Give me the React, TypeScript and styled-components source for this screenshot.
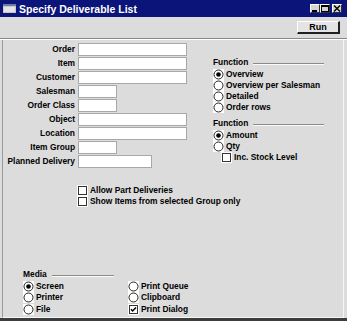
import React from 'react';
import styled, { createGlobalStyle } from 'styled-components';

const GlobalStyle = createGlobalStyle`
  html, body {
    margin: 0;
    padding: 0;
    background: #dcdcdc;
  }
  body {
    font-family: "Liberation Sans Narrow", "Liberation Sans", Arial, sans-serif;
  }
`;

const Window = styled.div`
  width: 347px;
  height: 321px;
  box-sizing: border-box;
  display: flex;
  flex-direction: column;
  background: #dcdcdc;
  border-bottom: 3px solid #3c3c3c;
  overflow: hidden;
`;

const TitleBar = styled.div`
  height: 17px;
  display: flex;
  align-items: center;
  padding: 0 5px 0 3px;
  background: #0b1478;
  color: #fff;
`;

const TitleText = styled.span`
  font-weight: bold;
  font-size: 10.5px;
  margin-left: 3px;
  flex: 1;
`;

const Controls = styled.div`
  display: flex;
`;

const CtrlButton = styled.div<{ gapLeft?: boolean }>`
  width: 10px;
  height: 9px;
  box-sizing: border-box;
  background: #d4d4d4;
  border-top: 1px solid #fff;
  border-left: 1px solid #fff;
  border-right: 1px solid #303030;
  border-bottom: 1px solid #303030;
  margin-left: ${p => (p.gapLeft ? '2px' : '0')};
  display: flex;
  align-items: center;
  justify-content: center;
`;

const Toolbar = styled.div`
  height: 19px;
  display: flex;
  align-items: center;
  justify-content: flex-end;
  padding-right: 7px;
  padding-top: 1px;
`;

const RunButton = styled.button`
  width: 43px;
  height: 13px;
  padding: 0;
  box-sizing: border-box;
  background: #e4e4e4;
  border-top: 1px solid #fff;
  border-left: 1px solid #fff;
  border-right: 2px solid #202020;
  border-bottom: 2px solid #202020;
  font-family: inherit;
  font-weight: bold;
  font-size: 9px;
  line-height: 9px;
  color: #000;
`;

const Separator = styled.div`
  border-top: 1px solid #888;
  border-bottom: 1px solid #fff;
  margin-top: 1px;
`;

const Panel = styled.div`
  flex: 1;
  display: flex;
  flex-direction: column;
  margin: 0 3px 0 2px;
  border-left: 1px solid #9a9a9a;
  border-right: 1px solid #f6f6f6;
  border-bottom: 1px solid #f6f6f6;
  padding: 3px 0 2px 0;
  font-size: 8.4px;
  font-weight: bold;
  color: #000;
`;

const TopArea = styled.div`
  display: flex;
`;

const FieldGrid = styled.div`
  display: grid;
  grid-template-columns: 72px auto;
  column-gap: 3px;
  row-gap: 1px;
  align-items: center;
  width: 205px;
`;

const Label = styled.label`
  justify-self: end;
  text-align: right;
  white-space: nowrap;
  line-height: 13px;
`;

const Field = styled.div<{ w: number }>`
  width: ${p => p.w}px;
  height: 13px;
  box-sizing: border-box;
  background: #fff;
  border: 1px solid #a8a8a8;
`;

const Side = styled.div`
  display: flex;
  flex-direction: column;
  padding-top: 13px;
  margin-left: 5px;
  width: 111px;
`;

const GroupHeader = styled.div<{ lineWidth?: number }>`
  display: flex;
  align-items: flex-end;
  height: 11px;
  line-height: 10px;
  margin-bottom: 2px;

  &::after {
    content: '';
    display: block;
    ${p => (p.lineWidth ? `width: ${p.lineWidth}px;` : 'flex: 1;')}
    margin-left: 5px;
    margin-bottom: 2px;
    border-top: 1px solid #8a8a8a;
    border-bottom: 1px solid #fafafa;
  }
`;

const Option = styled.div<{ indent?: number }>`
  display: flex;
  align-items: center;
  height: 11px;
  line-height: 11px;
  white-space: nowrap;
  padding-left: ${p => p.indent ?? 0}px;
`;

const Mark = styled.span`
  width: 11px;
  height: 11px;
  background: #fff;
  display: inline-flex;
  align-items: center;
  justify-content: center;
  margin-right: 2px;
  flex-shrink: 0;
`;

const Radio: React.FC<{ on?: boolean }> = ({ on }) => (
  <Mark>
    <svg width="11" height="11" viewBox="0 0 11 11">
      <circle cx="5.5" cy="5.5" r="4.5" fill="#fff" stroke="#222" strokeWidth="1" />
      {on && <circle cx="5.5" cy="5.5" r="2.3" fill="#000" />}
    </svg>
  </Mark>
);

const Check: React.FC<{ on?: boolean }> = ({ on }) => (
  <Mark>
    <svg width="11" height="11" viewBox="0 0 11 11">
      <rect x="1.5" y="1.5" width="8" height="8" fill="#fff" stroke="#333" strokeWidth="1" />
      {on && <path d="M3 5.3 L4.6 7 L8 3.4" fill="none" stroke="#000" strokeWidth="1.5" />}
    </svg>
  </Mark>
);

const Group = styled.div`
  display: flex;
  flex-direction: column;
  margin-bottom: 4px;
`;

const Flags = styled.div`
  display: flex;
  flex-direction: column;
  margin-top: 17px;
  padding-left: 74px;
`;

const MediaSection = styled.div`
  margin-top: auto;
  padding-left: 20px;
`;

const MediaGrid = styled.div`
  display: grid;
  grid-template-columns: 105px auto;
  grid-auto-flow: column;
  grid-template-rows: repeat(3, 11.5px);
  align-items: center;
`;

const fields: { label: string; w: number }[] = [
  { label: 'Order', w: 109 },
  { label: 'Item', w: 109 },
  { label: 'Customer', w: 109 },
  { label: 'Salesman', w: 39 },
  { label: 'Order Class', w: 39 },
  { label: 'Object', w: 109 },
  { label: 'Location', w: 109 },
  { label: 'Item Group', w: 39 },
  { label: 'Planned Delivery', w: 74 },
];

const App: React.FC = () => (
  <>
    <GlobalStyle />
    <Window>
      <TitleBar>
        <svg width="13" height="9" viewBox="0 0 13 9">
          <rect x="0" y="0" width="13" height="9" fill="#c8c8c8" />
          <rect x="0" y="0" width="13" height="2" fill="#6c7ca8" />
          <rect x="1" y="3" width="11" height="5" fill="#e4e4e4" />
        </svg>
        <TitleText>Specify Deliverable List</TitleText>
        <Controls>
          <CtrlButton>
            <svg width="8" height="7" viewBox="0 0 8 7">
              <rect x="1" y="5" width="5" height="2" fill="#000" />
            </svg>
          </CtrlButton>
          <CtrlButton>
            <svg width="8" height="7" viewBox="0 0 8 7">
              <rect x="0.5" y="0.5" width="7" height="6" fill="none" stroke="#000" />
              <rect x="0" y="0" width="8" height="2" fill="#000" />
            </svg>
          </CtrlButton>
          <CtrlButton gapLeft>
            <svg width="8" height="7" viewBox="0 0 8 7">
              <path d="M1 0.5 L7 6.5 M7 0.5 L1 6.5" stroke="#000" strokeWidth="1.4" />
            </svg>
          </CtrlButton>
        </Controls>
      </TitleBar>
      <Toolbar>
        <RunButton>Run</RunButton>
      </Toolbar>
      <Separator />
      <Panel>
        <TopArea>
          <FieldGrid>
            {fields.map(f => (
              <React.Fragment key={f.label}>
                <Label>{f.label}</Label>
                <Field w={f.w} />
              </React.Fragment>
            ))}
          </FieldGrid>
          <Side>
            <Group>
              <GroupHeader>Function</GroupHeader>
              <Option><Radio on />Overview</Option>
              <Option><Radio />Overview per Salesman</Option>
              <Option><Radio />Detailed</Option>
              <Option><Radio />Order rows</Option>
            </Group>
            <Group>
              <GroupHeader>Function</GroupHeader>
              <Option><Radio on />Amount</Option>
              <Option><Radio />Qty</Option>
              <Option indent={8}><Check />Inc. Stock Level</Option>
            </Group>
          </Side>
        </TopArea>
        <Flags>
          <Option><Check />Allow Part Deliveries</Option>
          <Option><Check />Show Items from selected Group only</Option>
        </Flags>
        <MediaSection>
          <GroupHeader lineWidth={62}>Media</GroupHeader>
          <MediaGrid>
            <Option><Radio on />Screen</Option>
            <Option><Radio />Printer</Option>
            <Option><Radio />File</Option>
            <Option><Radio />Print Queue</Option>
            <Option><Radio />Clipboard</Option>
            <Option><Check on />Print Dialog</Option>
          </MediaGrid>
        </MediaSection>
      </Panel>
    </Window>
  </>
);

export default App;
